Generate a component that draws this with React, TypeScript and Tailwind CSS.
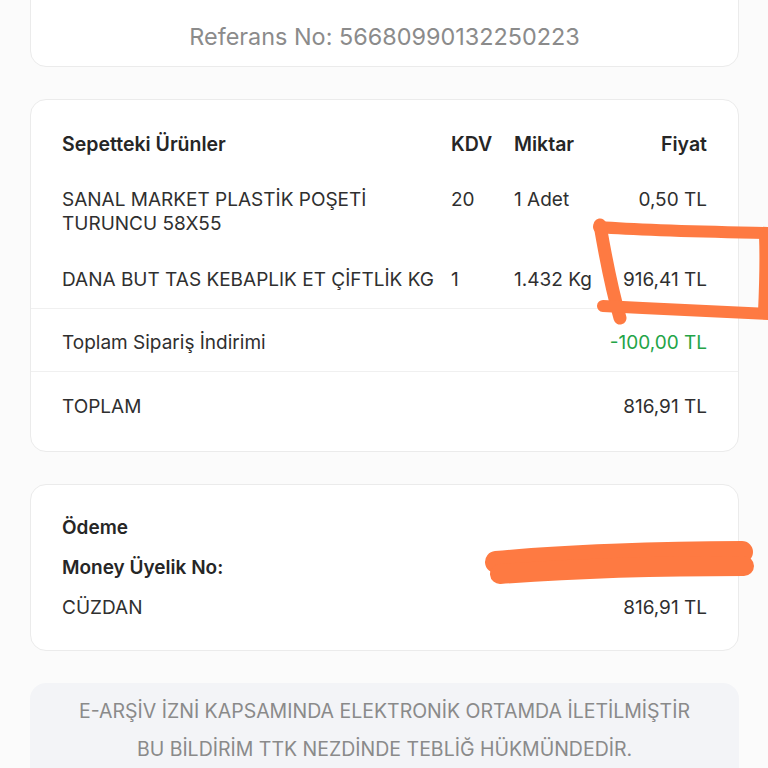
import React from 'react';

interface Item {
  name: string;
  kdv: string;
  qty: string;
  price: string;
}

const items: Item[] = [
  { name: 'SANAL MARKET PLASTİK POŞETİ TURUNCU 58X55', kdv: '20', qty: '1 Adet', price: '0,50 TL' },
  { name: 'DANA BUT TAS KEBAPLIK ET ÇİFTLİK KG', kdv: '1', qty: '1.432 Kg', price: '916,41 TL' },
];

const cols = 'grid grid-cols-[1fr_63px_100px_93px] items-start';

const App: React.FC = () => {
  return (
    <div
      className="relative h-[768px] overflow-hidden bg-[#fbfbfb] text-[#2f2f2f]"
      style={{ fontFamily: 'Inter, "Noto Sans", sans-serif' }}
    >
      <div className="flex flex-col gap-8 pl-[30px] pr-[29px]">
        {/* Referans */}
        <div className="-mt-16 rounded-2xl border border-[#ebebeb] bg-white pt-[86px] pb-[15px] text-center text-[23.4px] leading-[28px] text-[#8b8b8b]">
          Referans No: 56680990132250223
        </div>

        {/* Sepet */}
        <div className="rounded-2xl border border-[#ebebeb] bg-white pt-4 pb-[17px] text-[19px] leading-6">
          <div className={`${cols} px-[31px] py-4 text-[19.5px] font-semibold text-[#262626]`}>
            <span>Sepetteki Ürünler</span>
            <span>KDV</span>
            <span>Miktar</span>
            <span className="text-right">Fiyat</span>
          </div>
          {items.map((it, i) => (
            <div
              key={it.name}
              className={`${cols} px-[31px] py-4 ${i === items.length - 1 ? 'border-b border-[#f0f0f0]' : ''}`}
            >
              <span className="pr-2">{it.name}</span>
              <span>{it.kdv}</span>
              <span>{it.qty}</span>
              <span className="text-right">{it.price}</span>
            </div>
          ))}
          <div className="flex justify-between border-b border-[#f0f0f0] px-[31px] pt-[22px] pb-4">
            <span>Toplam Sipariş İndirimi</span>
            <span className="text-[#23a447]">-100,00 TL</span>
          </div>
          <div className="flex justify-between px-[31px] pt-[23px] pb-[15px]">
            <span>TOPLAM</span>
            <span>816,91 TL</span>
          </div>
        </div>

        {/* Ödeme */}
        <div className="flex flex-col gap-4 rounded-2xl border border-[#ebebeb] bg-white px-[31px] pt-[31px] pb-[30px] text-[19px] leading-6">
          <span className="font-semibold text-[#262626]">Ödeme</span>
          <span className="font-semibold text-[#262626]">Money Üyelik No:</span>
          <div className="flex justify-between">
            <span>CÜZDAN</span>
            <span>816,91 TL</span>
          </div>
        </div>

        {/* E-Arşiv */}
        <div className="rounded-2xl bg-[#f3f4f7] pt-[9px] pb-6 text-center text-[19.5px] leading-[38px] text-[#8a8a8a]">
          <p>E-ARŞİV İZNİ KAPSAMINDA ELEKTRONİK ORTAMDA İLETİLMİŞTİR</p>
          <p>BU BİLDİRİM TTK NEZDİNDE TEBLİĞ HÜKMÜNDEDİR.</p>
        </div>
      </div>

      {/* hand-drawn marks over the screenshot */}
      <svg className="pointer-events-none absolute inset-0" width="768" height="768" viewBox="0 0 768 768">
        <g fill="none" stroke="#fe7a42" strokeLinecap="round" strokeLinejoin="round">
          <path d="M599 227 C650 231 720 232 770 233" strokeWidth="12" />
          <path d="M600 225 C606 260 612 290 620 318" strokeWidth="13" />
          <path d="M603 306 C660 309 720 312 770 314" strokeWidth="12" />
          <path d="M764 236 C765 260 764 290 763 312" strokeWidth="10" />
          <path d="M496 562 C560 556 660 552 742 552" strokeWidth="22" />
          <path d="M500 574 C580 568 680 566 744 566" strokeWidth="20" />
        </g>
      </svg>
    </div>
  );
};

export default App;
